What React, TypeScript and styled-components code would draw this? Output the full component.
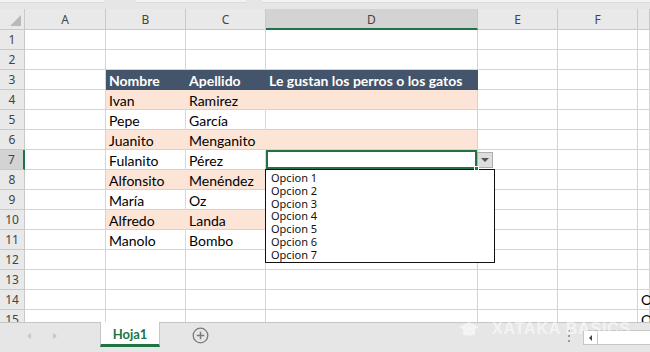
import React from "react";
import styled, { createGlobalStyle, css } from "styled-components";

const GlobalStyle = createGlobalStyle`
  html, body { margin: 0; padding: 0; background: #ffffff; overflow: hidden; }
  * { box-sizing: border-box; }
`;

const GREEN = "#217346";
const GRID = "#d4d4d4";
const HEAD_BG = "#e9e9e9";
const HEAD_LINE = "#c9c9c9";
const TABLE_LINE = "#f4c9ae";

const Window = styled.div`
  width: 650px;
  height: 352px;
  display: flex;
  flex-direction: column;
  background: #ffffff;
  font-family: Lato, "Noto Sans", sans-serif;
  position: relative;
  overflow: hidden;
`;

const TopStrip = styled.div`
  height: 9px;
  background: #e6e6e6;
  display: flex;
  align-items: flex-start;
`;

const Stub = styled.div<{ $w: number; $ml?: number }>`
  width: ${(p) => p.$w}px;
  margin-left: ${(p) => p.$ml ?? 0}px;
  height: 3px;
  background: #f3f3f3;
  border-bottom: 1px solid #d9d9d9;
`;

const Sheet = styled.div`
  flex: 1;
  display: grid;
  grid-template-columns: 25px 81px 80px 80px 212px 80px 80px 1fr;
  grid-template-rows: 21px;
  grid-auto-rows: 20px;
  overflow: hidden;
  align-content: start;
`;

const Corner = styled.div`
  background: ${HEAD_BG};
  border-right: 1px solid ${HEAD_LINE};
  border-bottom: 1px solid ${HEAD_LINE};
  position: relative;
  &::after {
    content: "";
    position: absolute;
    right: 3px;
    bottom: 3px;
    width: 0;
    height: 0;
    border-left: 11px solid transparent;
    border-bottom: 11px solid #b9b9b9;
  }
`;

const ColHeader = styled.div<{ $sel?: boolean }>`
  background: ${(p) => (p.$sel ? "#d3d3d3" : HEAD_BG)};
  border-right: 1px solid ${HEAD_LINE};
  border-bottom: ${(p) => (p.$sel ? `2px solid ${GREEN}` : `1px solid ${HEAD_LINE}`)};
  display: flex;
  align-items: center;
  justify-content: center;
  font-family: "Noto Sans", sans-serif;
  font-size: 12px;
  color: #444444;
  padding-top: ${(p) => (p.$sel ? "1px" : "0")};
`;

const RowHeader = styled.div<{ $sel?: boolean }>`
  background: ${(p) => (p.$sel ? "#d3d3d3" : HEAD_BG)};
  border-right: ${(p) => (p.$sel ? `2px solid ${GREEN}` : `1px solid ${HEAD_LINE}`)};
  border-bottom: 1px solid ${HEAD_LINE};
  display: flex;
  align-items: center;
  justify-content: center;
  font-family: "Noto Sans", sans-serif;
  font-size: 12px;
  color: #444444;
`;

type Kind = "plain" | "head" | "band" | "white";

const Cell = styled.div<{ $kind: Kind; $sel?: boolean; $edge?: boolean }>`
  position: relative;
  border-right: 1px solid ${GRID};
  border-bottom: 1px solid ${GRID};
  display: flex;
  align-items: center;
  padding: 1px 3px 0 3px;
  font-size: 14px;
  color: #000000;
  white-space: nowrap;
  overflow: visible;
  ${(p) =>
    p.$kind === "head" &&
    css`
      background: #44546a;
      color: #ffffff;
      font-weight: 700;
      border-right-color: #44546a;
      border-bottom-color: #44546a;
    `}
  ${(p) =>
    p.$kind === "band" &&
    css`
      background: #fce4d6;
      border-bottom-color: ${TABLE_LINE};
      border-right-color: ${p.$edge ? TABLE_LINE : "#fce4d6"};
    `}
  ${(p) =>
    p.$kind === "white" &&
    css`
      background: #ffffff;
      border-bottom-color: ${TABLE_LINE};
      border-right-color: ${p.$edge ? TABLE_LINE : "#e3d6ce"};
    `}
  ${(p) =>
    p.$sel &&
    css`
      box-shadow: inset 0 0 0 2px ${GREEN};
      z-index: 2;
    `}
`;

const Overflow = styled.span`
  position: absolute;
  left: 3px;
  top: 1px;
  font-size: 14px;
  color: #000;
`;

const FillHandle = styled.div`
  position: absolute;
  right: -2px;
  bottom: -2px;
  width: 5px;
  height: 5px;
  background: ${GREEN};
  border: 1px solid #ffffff;
  z-index: 4;
`;

const DropButton = styled.div`
  position: absolute;
  left: 100%;
  top: 2px;
  width: 16px;
  height: 16px;
  background: #dddddd;
  border: 1px solid #aeaeae;
  display: flex;
  align-items: center;
  justify-content: center;
  z-index: 3;
  &::after {
    content: "";
    width: 0;
    height: 0;
    border-left: 4px solid transparent;
    border-right: 4px solid transparent;
    border-top: 4px solid #555555;
  }
`;

const DropList = styled.ul`
  position: absolute;
  left: -1px;
  top: 100%;
  width: 230px;
  height: 94px;
  margin: 0;
  padding: 2px 0 0 5px;
  list-style: none;
  background: #ffffff;
  border: 1px solid #111111;
  z-index: 3;
`;

const DropItem = styled.li`
  font-family: "Noto Sans", sans-serif;
  font-size: 11px;
  line-height: 12.8px;
  color: #111111;
`;

const TabBar = styled.div`
  height: 30px;
  flex-shrink: 0;
  background: #e6e6e6;
  border-top: 1px solid #c6c6c6;
  display: flex;
  align-items: flex-start;
  position: relative;
`;

const NavArrows = styled.div`
  width: 100px;
  height: 25px;
  display: flex;
  align-items: center;
  gap: 22px;
  padding-left: 27px;
`;

const Arrow = styled.span<{ $dir: "l" | "r" }>`
  width: 0;
  height: 0;
  border-top: 3px solid transparent;
  border-bottom: 3px solid transparent;
  ${(p) =>
    p.$dir === "l"
      ? css`border-right: 4px solid #c4c4c4;`
      : css`border-left: 4px solid #c4c4c4;`}
`;

const SheetTab = styled.div`
  width: 60px;
  height: 25px;
  margin-top: -1px;
  background: #ffffff;
  border-left: 1px solid #c6c6c6;
  border-right: 1px solid #c6c6c6;
  border-bottom: 3px solid ${GREEN};
  display: flex;
  align-items: center;
  justify-content: center;
  font-weight: 700;
  font-size: 13px;
  color: ${GREEN};
  padding-top: 1px;
`;

const AddButton = styled.div`
  margin-left: 32px;
  height: 25px;
  display: flex;
  align-items: center;
`;

const Spacer = styled.div`
  flex: 1;
`;

const Dots = styled.div`
  height: 25px;
  display: flex;
  flex-direction: column;
  justify-content: center;
  gap: 3px;
  margin-right: 13px;
  span {
    width: 2px;
    height: 2px;
    background: #9a9a9a;
  }
`;

const Scroll = styled.div`
  display: flex;
  margin-top: 7px;
  height: 15px;
`;

const ScrollBtn = styled.div`
  width: 15px;
  height: 15px;
  background: #ffffff;
  border: 1px solid #c6c6c6;
  display: flex;
  align-items: center;
  justify-content: center;
  &::after {
    content: "";
    border-top: 3px solid transparent;
    border-bottom: 3px solid transparent;
    border-right: 3px solid #444444;
  }
`;

const ScrollTrack = styled.div`
  width: 52px;
  height: 15px;
  background: #ffffff;
  border-top: 1px solid #c6c6c6;
  border-bottom: 1px solid #c6c6c6;
`;

const Watermark = styled.div`
  position: absolute;
  left: 458px;
  top: 320px;
  display: flex;
  align-items: center;
  gap: 12px;
  color: rgba(255, 255, 255, 0.55);
  font-family: "Liberation Sans", sans-serif;
  font-weight: 700;
  font-size: 16px;
  letter-spacing: 0.8px;
  z-index: 5;
  pointer-events: none;
`;

const cols = ["A", "B", "C", "D", "E", "F", ""];

type Row = { b?: string; c?: string; d?: string; kind?: Kind };
const rows: Row[] = [
  {},
  {},
  { b: "Nombre", c: "Apellido", d: "Le gustan los perros o los gatos", kind: "head" },
  { b: "Ivan", c: "Ramirez", kind: "band" },
  { b: "Pepe", c: "García", kind: "white" },
  { b: "Juanito", c: "Menganito", kind: "band" },
  { b: "Fulanito", c: "Pérez", kind: "white" },
  { b: "Alfonsito", c: "Menéndez", kind: "band" },
  { b: "María", c: "Oz", kind: "white" },
  { b: "Alfredo", c: "Landa", kind: "band" },
  { b: "Manolo", c: "Bombo", kind: "white" },
  {},
  {},
  {},
  {},
];

const options = ["Opcion 1", "Opcion 2", "Opcion 3", "Opcion 4", "Opcion 5", "Opcion 6", "Opcion 7"];

export default function App() {
  return (
    <Window>
      <GlobalStyle />
      <TopStrip>
        <Stub $w={105} />
        <Stub $w={110} $ml={32} />
        <Stub $w={390} $ml={16} />
      </TopStrip>
      <Sheet>
        <Corner />
        {cols.map((c, i) => (
          <ColHeader key={i} $sel={c === "D"}>
            {c}
          </ColHeader>
        ))}
        {rows.map((r, i) => {
          const n = i + 1;
          const k: Kind = r.kind ?? "plain";
          const sel = n === 7;
          return (
            <React.Fragment key={n}>
              <RowHeader $sel={sel}>{n}</RowHeader>
              <Cell $kind="plain" />
              <Cell $kind={k}>{r.b}</Cell>
              <Cell $kind={k}>{r.c}</Cell>
              <Cell $kind={sel ? "white" : k} $edge $sel={sel}>
                {r.d}
                {sel && (
                  <>
                    <FillHandle />
                    <DropButton />
                    <DropList>
                      {options.map((o) => (
                        <DropItem key={o}>{o}</DropItem>
                      ))}
                    </DropList>
                  </>
                )}
              </Cell>
              <Cell $kind="plain" />
              <Cell $kind="plain" />
              <Cell $kind="plain">{n >= 14 && <Overflow>O</Overflow>}</Cell>
            </React.Fragment>
          );
        })}
      </Sheet>
      <TabBar>
        <NavArrows>
          <Arrow $dir="l" />
          <Arrow $dir="r" />
        </NavArrows>
        <SheetTab>Hoja1</SheetTab>
        <AddButton>
          <svg width="17" height="17" viewBox="0 0 17 17">
            <circle cx="8.5" cy="8.5" r="7.3" fill="none" stroke="#7a7a7a" strokeWidth="1.3" />
            <path d="M8.5 4.8v7.4M4.8 8.5h7.4" stroke="#7a7a7a" strokeWidth="1.5" />
          </svg>
        </AddButton>
        <Spacer />
        <Dots>
          <span />
          <span />
          <span />
        </Dots>
        <Scroll>
          <ScrollBtn />
          <ScrollTrack />
        </Scroll>
      </TabBar>
      <Watermark>
        <svg width="22" height="16" viewBox="0 0 22 16">
          <path d="M1 6 L11 1 L21 6 L11 11 Z" fill="rgba(255,255,255,0.55)" />
          <path d="M5 8 v5 c3 2 9 2 12 0 v-5 l-6 3 z" fill="rgba(255,255,255,0.55)" />
        </svg>
        <span>XATAKA BASICS</span>
      </Watermark>
    </Window>
  );
}
